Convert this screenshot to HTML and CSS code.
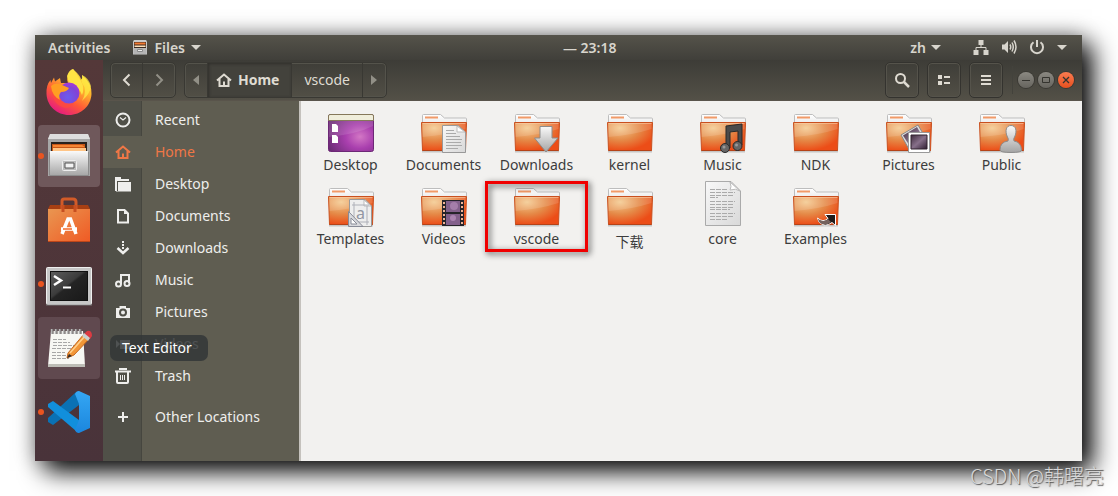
FILE: index.html
```html
<!DOCTYPE html>
<html lang="en">
<head>
<meta charset="utf-8">
<title>Files</title>
<link rel="stylesheet" href="styles.css">
</head>
<body>
<svg class="defs" width="0" height="0" aria-hidden="true">
  <defs>
    <radialGradient id="gFolder" cx=".28" cy=".2" r=".95"><stop offset="0" stop-color="#f4ca90"/><stop offset=".45" stop-color="#e58a48"/><stop offset=".85" stop-color="#ec4d17"/><stop offset="1" stop-color="#ec4d17"/></radialGradient>
    <linearGradient id="gTab" x1="0" y1="0" x2="0" y2="1"><stop offset="0" stop-color="#fff"/><stop offset="1" stop-color="#e4e4e4"/></linearGradient>
    <radialGradient id="gDesk" cx=".7" cy=".6" r=".8"><stop offset="0" stop-color="#d377c5"/><stop offset=".4" stop-color="#a93fae"/><stop offset="1" stop-color="#64286f"/></radialGradient>
    <linearGradient id="gGrey" x1="0" y1="0" x2="0" y2="1"><stop offset="0" stop-color="#fafafa"/><stop offset="1" stop-color="#a4a4a4"/></linearGradient>
    <linearGradient id="gPaper" x1="0" y1="0" x2="1" y2="1"><stop offset="0" stop-color="#f8f8f8"/><stop offset="1" stop-color="#d9d9d9"/></linearGradient>
    <linearGradient id="gPhoto" x1="0" y1="0" x2="1" y2="1"><stop offset="0" stop-color="#3f2c3d"/><stop offset=".5" stop-color="#87708a"/><stop offset="1" stop-color="#2f1d31"/></linearGradient>
    <linearGradient id="gFox" x1=".85" y1="0" x2=".25" y2="1"><stop offset="0" stop-color="#fff44f"/><stop offset=".35" stop-color="#ffb52b"/><stop offset=".65" stop-color="#ff5a36"/><stop offset="1" stop-color="#e31587"/></linearGradient>
    <radialGradient id="gGlobe" cx=".45" cy=".7" r=".8"><stop offset="0" stop-color="#6a5cf0"/><stop offset=".6" stop-color="#8143d5"/><stop offset="1" stop-color="#b833d8"/></radialGradient>
    <linearGradient id="gBag" x1="0" y1="0" x2="1" y2="1"><stop offset="0" stop-color="#e99651"/><stop offset="1" stop-color="#f05a24"/></linearGradient>
    <linearGradient id="gTerm" x1="0" y1="0" x2="1" y2="1"><stop offset="0" stop-color="#5d5d5d"/><stop offset=".45" stop-color="#3c3c3c"/><stop offset=".5" stop-color="#242424"/><stop offset="1" stop-color="#191919"/></linearGradient>
    <linearGradient id="gCode" x1="0" y1="0" x2="0" y2="1"><stop offset="0" stop-color="#35a7f4"/><stop offset="1" stop-color="#1b86dd"/></linearGradient>
    <symbol id="folder" viewBox="0 -1 48 48">
      <path d="M2 44.500H46" stroke="#000" stroke-opacity=".18" stroke-width="2"/>
      <path d="M2.500 20V8.500Q2.500 7.500 3.500 7.500H20.500L24.500 11H45.500Q46.500 11 46.500 12V20Z" fill="url(#gTab)" stroke="#bdbdbd"/>
      <rect x="5" y="9.500" width="13" height="2" fill="#f19a68"/>
      <path d="M1.500 15.500H46.500L45.500 43.500H2.500Z" fill="url(#gFolder)" stroke="#c9501f"/>
      <path d="M2.500 16.500H45.500V22Q27 28 2.500 30Z" fill="#fff" fill-opacity=".13"/>
      <path d="M2.500 16.500H45.500" stroke="#fbd2ae" stroke-opacity=".6"/>
      <path d="M2.500 43.500H45.500" stroke="#b54318"/>
    </symbol>
    <symbol id="house" viewBox="0 0 16 16"><path d="M1 8.500L8 2.500L15 8.500M3.500 7V14H12.500V7" fill="none" stroke="currentColor" stroke-width="2"/><path d="M7 9.500H9V14H7Z" fill="currentColor"/></symbol>
  </defs>
</svg>

<main class="screen">
  <header class="topbar">
    <div class="group">
      <button class="top-item" type="button">Activities</button>
      <button class="top-item app-menu" type="button">
        <svg width="16" height="16" viewBox="0 0 16 16" aria-hidden="true"><path d="M1 1.500L2 0H14L15 1.500V14.500H1Z" fill="#c9c9c9"/><path d="M2 2H14V8H2Z" fill="#3a2a20"/><path d="M2.500 2.500H13.500V4.500H2.500Z" fill="#f47a32"/><path d="M2.500 5.500H13.500V7H2.500Z" fill="#ffdfb8"/><path d="M1.500 8H14.500V14H1.500Z" fill="#b5b5b5"/><path d="M5.500 9.500H10.500V11.500H5.500Z" fill="#eee" stroke="#888"/></svg>
        Files
        <span class="caret"></span>
      </button>
    </div>
    <time class="clock">— 23:18</time>
    <div class="group">
      <button class="top-item lang" type="button">zh <span class="caret"></span></button>
      <button class="top-item status" type="button" aria-label="System menu">
        <svg width="16" height="16" viewBox="0 0 16 16"><path d="M5.500 0H10.500V5H5.500ZM.500 10H5.500V15H.500ZM10.500 10H15.500V15H10.500Z" fill="currentColor"/><path d="M8 5V7.500M3 10V7.500H13V10" fill="none" stroke="currentColor"/></svg>
        <svg width="16" height="16" viewBox="0 0 16 16"><path d="M1 4.500H3.500L7 1V13L3.500 9.500H1Z" fill="currentColor"/><path d="M9 4.500Q10.500 7 9 9.500M11 2.500Q13.500 7 11 11.500M13 .500Q17 7 13 13.500" fill="none" stroke="currentColor" stroke-width="1.500"/></svg>
        <svg width="16" height="16" viewBox="0 0 16 16"><path d="M4.500 2.300A6 6 0 1 0 11.500 2.300M8 -.500V7" fill="none" stroke="currentColor" stroke-width="2"/></svg>
        <span class="caret"></span>
      </button>
    </div>
  </header>

  <div class="workspace">
    <nav class="dock" aria-label="Dock">
      <button class="tile" type="button" aria-label="Firefox">
        <svg width="48" height="48" viewBox="0 0 48 48"><path d="M28 1C31 4 35 8 36 12Q38 10 37 7Q47 15 46.500 26C46 38 36 47 24 47S2 38 1.500 26Q1 17 5.500 12L6 15L9 9.500L10 13.500L15 10L16 15H23Q20 9 28 1Z" fill="url(#gFox)"/><path d="M28 1C33 6 36 8 37 15Q43 22 37 33Q45 26 46 18Q44 10 37 7Q38 10 36 12Q34 7 28 1Z" fill="#ffec45" fill-opacity=".7"/><path d="M22 8Q24 2 28 1Q32 7 36 13Q40 20 37 27Q33 17 24 15Z" fill="#ffe344"/><circle cx="24" cy="25" r="10.500" fill="url(#gGlobe)"/><path d="M6 18Q10 14 17 17L24 20Q22 24 16 24Q13 27 15 32Q7 28 6 18Z" fill="#ff9e22"/><path d="M15 32Q20 39 29 35Q24 43 15 38Q8 34 7 25Q10 30 15 32Z" fill="#ff4b3c" fill-opacity=".7"/></svg>
      </button>
      <button class="tile active" type="button" aria-label="Files"><span class="dot"></span>
        <svg width="48" height="48" viewBox="0 0 48 48"><path d="M5 2H43L45 7V44H3V7Z" fill="#a7a7a7"/><path d="M5 2H43L45 7H3Z" fill="#dedede"/><path d="M6 10H42V21H6Z" fill="#28211d"/><path d="M7 12H40V20H7Z" fill="#c75718"/><path d="M8 13H37L40 15H8Z" fill="#f58533"/><path d="M8 16H41V19H8Z" fill="#ffc587"/><path d="M5 19H43L44 44H4Z" fill="url(#gGrey)"/><path d="M4.500 20V43.500H43.500V20" fill="none" stroke="#8c8c8c"/><rect x="17.500" y="28.500" width="14" height="10" rx="1" fill="#bbb" stroke="#eee"/><path d="M20 31H29V36H20Z" fill="#f3f3f3" stroke="#555"/></svg>
      </button>
      <button class="tile" type="button" aria-label="Ubuntu Software">
        <svg width="48" height="48" viewBox="0 0 48 48"><path d="M5 9H43L45 13H3Z" fill="#a73f13"/><path d="M17 15V5Q17 3 19 3H28Q31 3 31 6V15" fill="none" stroke="#d25b28" stroke-width="3"/><path d="M3 13H45V46H3Z" fill="url(#gBag)"/><path d="M18 16V9M30 16V9" stroke="#c74f20" stroke-width="3"/><path d="M17 38L23 23H25.500L31 38M16 33H32" fill="none" stroke="#fff" stroke-width="3.500"/><path d="M18 33H27" stroke="#f36928" stroke-width="1.500"/><path d="M3 45.500H45" stroke="#be4619"/></svg>
      </button>
      <button class="tile" type="button" aria-label="Terminal"><span class="dot"></span>
        <svg width="48" height="48" viewBox="0 -2 48 48"><rect x="1.500" y="5.500" width="45" height="37" rx="1" fill="#c6c6c6" stroke="#efefef"/><path d="M1 43H47" stroke="#777"/><rect x="5.500" y="9.500" width="37" height="29" fill="url(#gTerm)" stroke="#111"/><path d="M9 14L16 18.500L9 23" fill="none" stroke="#fff" stroke-width="2.500"/><path d="M18 25.500H26" stroke="#fff" stroke-width="2"/></svg>
      </button>
      <button class="tile hover" type="button" aria-label="Text Editor">
        <svg width="48" height="48" viewBox="0 -1 48 48"><path d="M6 6H38L40 41H3Z" fill="#f7f7f3"/><path d="M3 39H40V42H3Z" fill="#bdbdb6"/><path d="M7 4V9M11 4V9M15 4V9M19 4V9M23 4V9M27 4V9M31 4V9M35 4V9" stroke="#b7b7b7" stroke-width="2.400"/><path d="M8 4V9M12 4V9M16 4V9M20 4V9M24 4V9M28 4V9M32 4V9M36 4V9" stroke="#625b5a"/><path d="M8 14.500H21M8 17.500H25M8 20.500H31M7 23.500H26M7 27.500H20M7 30.500H26M7 33.500H24" stroke="#a7a7a7" stroke-dasharray="4 1"/><path d="M23 28L39 9L45 13L29 30L22 33Z" fill="#f29637" stroke="#c7681c"/><path d="M25 28L40 11" stroke="#ffd18c" stroke-width="1.500"/><path d="M39 9L42 6Q47 5 47 11L45 14Z" fill="#dc3b42"/><path d="M37 11L39 8L45 13L43 16Z" fill="#c9d0d0"/><path d="M22 33L24 29L27 31Z" fill="#342b26"/></svg>
      </button>
      <button class="tile" type="button" aria-label="Visual Studio Code"><span class="dot"></span>
        <svg width="48" height="48" viewBox="0 0 48 48"><path d="M3 30L30 5L34 3V17L8 37L3 34Z" fill="#0a71b4"/><path d="M3 16L8 13L34 32V45L31 43L3 19Z" fill="#118fdc"/><path d="M34 3L45 8V40L34 45Q31 45 30 42L34 32V16L30 6Q31 3 34 3Z" fill="url(#gCode)"/></svg>
      </button>
    </nav>

    <section class="window">
      <header class="headerbar">
        <div class="linked nav">
          <button type="button" aria-label="Back"><svg width="16" height="16" viewBox="0 0 16 16"><path d="M10.500 2.500L5 8L10.500 13.500" fill="none" stroke="currentColor" stroke-width="2"/></svg></button>
          <button type="button" class="dim" aria-label="Forward"><svg width="16" height="16" viewBox="0 0 16 16"><path d="M5.500 2.500L11 8L5.500 13.500" fill="none" stroke="currentColor" stroke-width="2"/></svg></button>
        </div>
        <div class="linked path">
          <button type="button" class="dim edge" aria-label="Scroll left"><svg width="6" height="10" viewBox="0 0 6 10"><path d="M6 0V10L0 5Z" fill="currentColor"/></svg></button>
          <button type="button" class="current"><svg width="16" height="16" aria-hidden="true"><use href="#house"/></svg>Home</button>
          <button type="button">vscode</button>
          <button type="button" class="dim edge" aria-label="Scroll right"><svg width="6" height="10" viewBox="0 0 6 10"><path d="M0 0V10L6 5Z" fill="currentColor"/></svg></button>
        </div>
        <div class="tools">
          <button type="button" aria-label="Search"><svg width="16" height="16" viewBox="0 0 16 16"><circle cx="6.500" cy="6.500" r="4.500" fill="none" stroke="currentColor" stroke-width="2"/><path d="M10 10L15 15" stroke="currentColor" stroke-width="2.500"/></svg></button>
          <button type="button" aria-label="View"><svg width="16" height="16" viewBox="0 0 16 16"><path d="M2 3H6V7H2ZM2 9H6V13H2ZM8 4H14V6H8ZM8 10H14V12H8Z" fill="currentColor"/></svg></button>
          <button type="button" aria-label="Menu"><svg width="16" height="16" viewBox="0 0 16 16"><path d="M3 3H13V5H3ZM3 7H13V9H3ZM3 11H13V13H3Z" fill="currentColor"/></svg></button>
        </div>
        <div class="controls">
          <button type="button" aria-label="Minimize"><svg width="10" height="10" viewBox="0 0 10 10"><path d="M1 5.500H9" stroke="currentColor"/></svg></button>
          <button type="button" aria-label="Maximize"><svg width="10" height="10" viewBox="0 0 10 10"><path d="M1.500 2.500H8.500V7.500H1.500Z" fill="none" stroke="currentColor"/></svg></button>
          <button type="button" class="close" aria-label="Close"><svg width="10" height="10" viewBox="0 0 10 10"><path d="M2 2L8 8M8 2L2 8" stroke="currentColor" stroke-width="1.300"/></svg></button>
        </div>
      </header>

      <div class="panes">
        <nav class="places" aria-label="Places">
          <a href="#"><span class="glyph"><svg width="16" height="16" viewBox="0 0 16 16"><circle cx="8" cy="8" r="6.500" fill="none" stroke="currentColor" stroke-width="2"/><path d="M5 5.500L8 8L11 5.500" fill="none" stroke="currentColor" stroke-width="1.200"/></svg></span>Recent</a>
          <a href="#" class="selected"><span class="glyph"><svg width="16" height="16"><use href="#house"/></svg></span>Home</a>
          <a href="#"><span class="glyph"><svg width="16" height="16" viewBox="0 0 16 16"><path d="M0 1H6V3H14V5H2V15H0Z" fill="currentColor"/><path d="M3 6H16V15.500H1V15H3Z" fill="currentColor"/></svg></span>Desktop</a>
          <a href="#"><span class="glyph"><svg width="16" height="16" viewBox="0 0 16 16"><path d="M3 2H9.500L13 5.500V14.500H3Z" fill="none" stroke="currentColor" stroke-width="2"/><path d="M9 1V6H14Z" fill="currentColor"/></svg></span>Documents</a>
          <a href="#"><span class="glyph"><svg width="16" height="16" viewBox="0 0 16 16"><path d="M7 1H9V3H7ZM7 4H9V6H7ZM7 7H9V9H7Z" fill="currentColor"/><path d="M2.500 8L8 13L13.500 8" fill="none" stroke="currentColor" stroke-width="2.500"/></svg></span>Downloads</a>
          <a href="#"><span class="glyph"><svg width="16" height="16" viewBox="0 0 16 16"><path d="M6 12V3H14V11" fill="none" stroke="currentColor" stroke-width="2"/><circle cx="3.500" cy="12" r="2.500" fill="none" stroke="currentColor" stroke-width="2"/><circle cx="12" cy="11.500" r="2.500" fill="none" stroke="currentColor" stroke-width="2"/></svg></span>Music</a>
          <a href="#"><span class="glyph"><svg width="16" height="16" viewBox="0 0 16 16"><path fill-rule="evenodd" d="M1 4H4.500V2H11V4H15V14H1ZM8 4.500A4 4 0 1 0 8 12.500A4 4 0 1 0 8 4.500ZM8 6.500A2 2 0 1 1 8 10.500A2 2 0 1 1 8 6.500Z" fill="currentColor"/></svg></span>Pictures</a>
          <a href="#"><span class="glyph"><svg width="16" height="16" viewBox="0 0 16 16"><path d="M1 4L5 8L1 12ZM5 4H15V13H5Z" fill="currentColor"/></svg></span>Videos</a>
          <a href="#"><span class="glyph"><svg width="16" height="16" viewBox="0 0 16 16"><path d="M0 3.500H16M4 1H12" stroke="currentColor" stroke-width="2"/><path d="M2 4V14Q2 15 3 15H12Q13 15 13 14V4" fill="none" stroke="currentColor" stroke-width="2"/><path d="M5.500 7V12M7.500 7V12M9.500 7V12" stroke="currentColor"/></svg></span>Trash</a>
          <a href="#" class="other"><span class="glyph"><svg width="16" height="16" viewBox="0 0 16 16"><path d="M8 3V13M3 8H13" stroke="currentColor" stroke-width="2"/></svg></span>Other Locations</a>
        </nav>

        <ul class="files">
          <li><svg viewBox="0 0 48 48"><rect x="1.500" y="8.500" width="45" height="37" rx="2" fill="url(#gDesk)" stroke="#6d2876"/><path d="M2 15H46V20Q30 28 2 31Z" fill="#fff" fill-opacity=".12"/><path d="M1.500 14.500V10Q1.500 8.500 3 8.500H45Q46.500 8.500 46.500 10V14.500Z" fill="#f0eedb" stroke="#85785a"/><path d="M5 18H9L11 20V26H5ZM5 29H9L11 31V37H5Z" fill="#fff"/></svg><span>Desktop</span></li>
          <li><svg viewBox="0 0 48 48"><use href="#folder"/><path d="M22.500 19.500H38L45.500 26V46.500H22.500Z" fill="url(#gPaper)" stroke="#999"/><path d="M37 20V26H45Z" fill="#fff" stroke="#bbb"/><path d="M26 24.500H34M26 27.500H36M26 30.500H40M26 33.500H42M26 36.500H41M26 39.500H42M26 42.500H38" stroke="#aaa"/></svg><span>Documents</span></li>
          <li><svg viewBox="0 0 48 48"><use href="#folder"/><path d="M27 20.500H39V32H45L33 46L21.500 32H27Z" fill="url(#gGrey)" stroke="#8d8d8d"/></svg><span>Downloads</span></li>
          <li><svg viewBox="0 0 48 48"><use href="#folder"/></svg><span>kernel</span></li>
          <li><svg viewBox="0 0 48 48"><use href="#folder"/><path d="M27 20L43 18V39H39V25L31 26V42H27Z" fill="#4a4a4a" stroke="#292929"/><circle cx="26" cy="42" r="4.500" fill="#666" stroke="#292929"/><circle cx="38.500" cy="40" r="4.500" fill="#666" stroke="#292929"/><circle cx="25" cy="41" r="1.500" fill="#999"/><circle cx="37.500" cy="39" r="1.500" fill="#999"/></svg><span>Music</span></li>
          <li><svg viewBox="0 0 48 48"><use href="#folder"/></svg><span>NDK</span></li>
          <li><svg viewBox="0 0 48 48"><use href="#folder"/><path d="M16 29L33 19L43 36L25 45Z" fill="#ddd" stroke="#888"/><path d="M18 29.500L32 21L40 35L26 42Z" fill="url(#gPhoto)"/><path d="M23.500 26.500H44.500V46.500H23.500Z" fill="#fff" stroke="#999"/><path d="M26 29H42V43H26Z" fill="url(#gPhoto)" stroke="#30232f"/></svg><span>Pictures</span></li>
          <li><svg viewBox="0 0 48 48"><use href="#folder"/><path d="M33 19.500C28 19.500 27 25 29 30Q31 33 30 35Q22 36 22 44Q22 46.500 33 46.500T43.500 44Q43 36 36 35Q35 33 37 30C39 25 38 19.500 33 19.500Z" fill="url(#gGrey)" stroke="#8c8c8c"/></svg><span>Public</span></li>
          <li><svg viewBox="0 0 48 48"><use href="#folder"/><path d="M22.500 19.500H38L44.500 26V46.500H22.500Z" fill="#eee" stroke="#999"/><path d="M37 20V26H44Z" fill="#fff" stroke="#bbb"/><path d="M25 25H42M25 42H42M27 22V44M40 26V45" stroke="#aeb0b8"/><text class="type-sample" x="29" y="39">a</text><path d="M21.500 31.500V46.500H36Z" fill="#d5d6da" fill-opacity=".9" stroke="#888b97"/><path d="M24 38V44H30Z" fill="#fff" stroke="#888b97"/></svg><span>Templates</span></li>
          <li><svg viewBox="0 0 48 48"><use href="#folder"/><path d="M22 20H44V46H22Z" fill="#26242a"/><path d="M26 21H40V32H26ZM26 34H40V45H26Z" fill="#83608b"/><circle cx="34" cy="26" r="4" fill="#c79bc9" fill-opacity=".5"/><circle cx="33" cy="38" r="3" fill="#c79bc9" fill-opacity=".6"/><path d="M24 22V45M42 22V45" stroke="#f0b395" stroke-width="2" stroke-dasharray="2 2"/></svg><span>Videos</span></li>
          <li class="marked"><svg viewBox="0 0 48 48"><use href="#folder"/></svg><span>vscode</span></li>
          <li><svg viewBox="0 0 48 48"><use href="#folder"/></svg><span class="han" lang="zh">下载</span></li>
          <li><svg viewBox="0 0 48 48"><path d="M6.500 1.500H32L41.500 11V45.500H6.500Z" fill="url(#gPaper)" stroke="#aaa"/><path d="M31 2Q33 7 31 10Q37 8 41 11Z" fill="#fff" stroke="#bbb"/><path d="M11 9.500H29M11 12.500H36M11 15.500H35M11 17.500H19M11 21.500H36M11 24.500H34M11 27.500H34M11 29.500H31M11 33.500H36M11 36.500H35M11 39.500H28" stroke="#aaa" stroke-dasharray="5 1"/></svg><span>core</span></li>
          <li><svg viewBox="0 0 48 48"><use href="#folder"/><path d="M33 34.500H43.500V45.500L40 42.500Q33 48 27 42L25.500 38Q31 43 36 38.500Z" fill="#211b1a" stroke="#fff"/><path d="M26 39Q31 43 36 39L39 42Q33 47 27 42Z" fill="#75625d"/></svg><span>Examples</span></li>
        </ul>
      </div>
    </section>
    <div class="tooltip" role="tooltip">Text Editor</div>
  </div>
</main>
<p class="watermark">CSDN @韩曙亮</p>
</body>
</html>
```

FILE: styles.css
```css
* { box-sizing: border-box; }

body {
  position: relative;
  display: flex;
  min-height: 100vh;
  margin: 0;
  padding: 35px 36px 35px 35px;
  background: #fff;
  font: 14px/22px "Noto Sans", "Noto Sans CJK SC", sans-serif;
}

button {
  display: flex;
  align-items: center;
  justify-content: center;
  margin: 0;
  padding: 0;
  border: 0;
  background: none;
  color: inherit;
  font: inherit;
}

svg { display: block; flex: none; }
.defs { position: absolute; }

.screen {
  display: flex;
  flex: 1;
  flex-direction: column;
  min-width: 0;
  box-shadow: 10px 10px 24px #000, 0 0 20px rgba(0, 0, 0, 0.3);
}

.topbar {
  display: flex;
  align-items: center;
  justify-content: space-between;
  height: 25px;
  padding: 0 15px 0 13px;
  background: linear-gradient(#55534a, #403f3a);
  color: #d8d5cd;
  font-weight: 600;
}

.group { display: flex; gap: 22px; }
.group:last-child { gap: 32px; }
.app-menu { gap: 6px; }
.lang { gap: 5px; }
.status { gap: 12px; }
.clock { padding-left: 68px; }

.caret {
  border: 5px solid transparent;
  border-top-color: currentColor;
  border-bottom: 0;
}

.workspace {
  position: relative;
  display: flex;
  flex: 1;
}

.dock {
  display: flex;
  flex: none;
  flex-direction: column;
  gap: 2px;
  width: 68px;
  padding: 1px 3px;
  background: linear-gradient(#543839, #49333a);
}

.tile {
  position: relative;
  height: 62px;
  border-radius: 4px;
}

.tile.active { background: #6f585b; }
.tile.hover { background: #60494f; }

.dot {
  position: absolute;
  top: 28px;
  left: 0;
  width: 6px;
  height: 6px;
  border-radius: 50%;
  background: #e95420;
}

.window {
  display: flex;
  flex: 1;
  flex-direction: column;
  min-width: 0;
}

.headerbar {
  display: flex;
  align-items: center;
  height: 41px;
  padding: 0 8px 0 7px;
  background: linear-gradient(#3d3c37, #535047);
  border-bottom: 1px solid #59544b;
  color: #dfdbd2;
}

.linked {
  display: flex;
  height: 36px;
  border: 1px solid #393833;
  border-radius: 5px;
  box-shadow: inset 0 0 0 1px #54534b;
}

.linked button { border-right: 1px solid #393833; }
.linked button:last-child { border-right: 0; }
.nav button { width: 32px; }
.path { margin-left: 8px; }
.path button { gap: 6px; padding: 0 12px; }
.path .edge { width: 23px; padding: 0; }
.path .current {
  padding: 0 12px 0 8px;
  background: #43423c;
  box-shadow: inset 1px 1px 3px #302f2b;
  font-weight: 700;
}
.linked .dim { color: #929087; }

.tools { display: flex; gap: 8px; margin-left: auto; }
.tools button {
  width: 34px;
  height: 36px;
  border: 1px solid #34332f;
  border-radius: 5px;
  box-shadow: inset 0 0 0 1px #55534b;
}

.controls {
  display: flex;
  align-items: center;
  gap: 4px;
  height: 28px;
  margin-left: 9px;
  padding-left: 5px;
  border-left: 1px solid #43423c;
}

.controls button {
  width: 16px;
  height: 16px;
  border-radius: 50%;
  background: linear-gradient(#8b8982, #66645e);
  box-shadow: 0 0 0 1px #3b3934;
  color: #35342f;
}

.controls .close { background: linear-gradient(#fa7b50, #e6501f); }

.panes { display: flex; flex: 1; }

.places {
  flex: none;
  width: 198px;
  padding-top: 3px;
  background: linear-gradient(to right, #505048 38px, #46463f 38px 39px, #5f5d51 39px);
  border-right: 2px solid #c5c2bd;
}

.places a {
  display: flex;
  align-items: center;
  gap: 13px;
  height: 32px;
  color: #eeeeec;
  text-decoration: none;
}

.places .selected { background: #5f5d51; color: #f07746; }
.places .other { margin-top: 9px; }
.glyph { display: flex; justify-content: center; width: 39px; }

.files {
  display: grid;
  flex: 1;
  grid-template-columns: repeat(auto-fill, 93px);
  align-content: start;
  row-gap: 4px;
  margin: 0;
  padding: 5px 3px;
  background: #f2f1ef;
  color: #3c3c3c;
  list-style: none;
}

.files li {
  position: relative;
  display: flex;
  flex-direction: column;
  align-items: center;
}

.files svg { width: 48px; height: 48px; }
.files .han { padding-top: 3px; }
.type-sample { fill: #9296a3; font: 16px "Noto Sans", sans-serif; }

.marked::after {
  content: "";
  position: absolute;
  inset: 1px -5px;
  border: 3px solid #f00000;
  filter: drop-shadow(2px 2px 3px rgba(0, 0, 0, 0.7));
}

.tooltip {
  position: absolute;
  top: 275px;
  left: 75px;
  padding: 2px 16px 2px 12px;
  border-radius: 7px;
  background: rgba(50, 54, 55, 0.85);
  color: #fff;
}

.watermark {
  position: absolute;
  right: 14px;
  bottom: 7px;
  margin: 0;
  color: #d8d8d8;
  font: 300 20px/26px "Noto Sans CJK SC", sans-serif;
  text-shadow: 1px 1px 1px #555;
}
```
